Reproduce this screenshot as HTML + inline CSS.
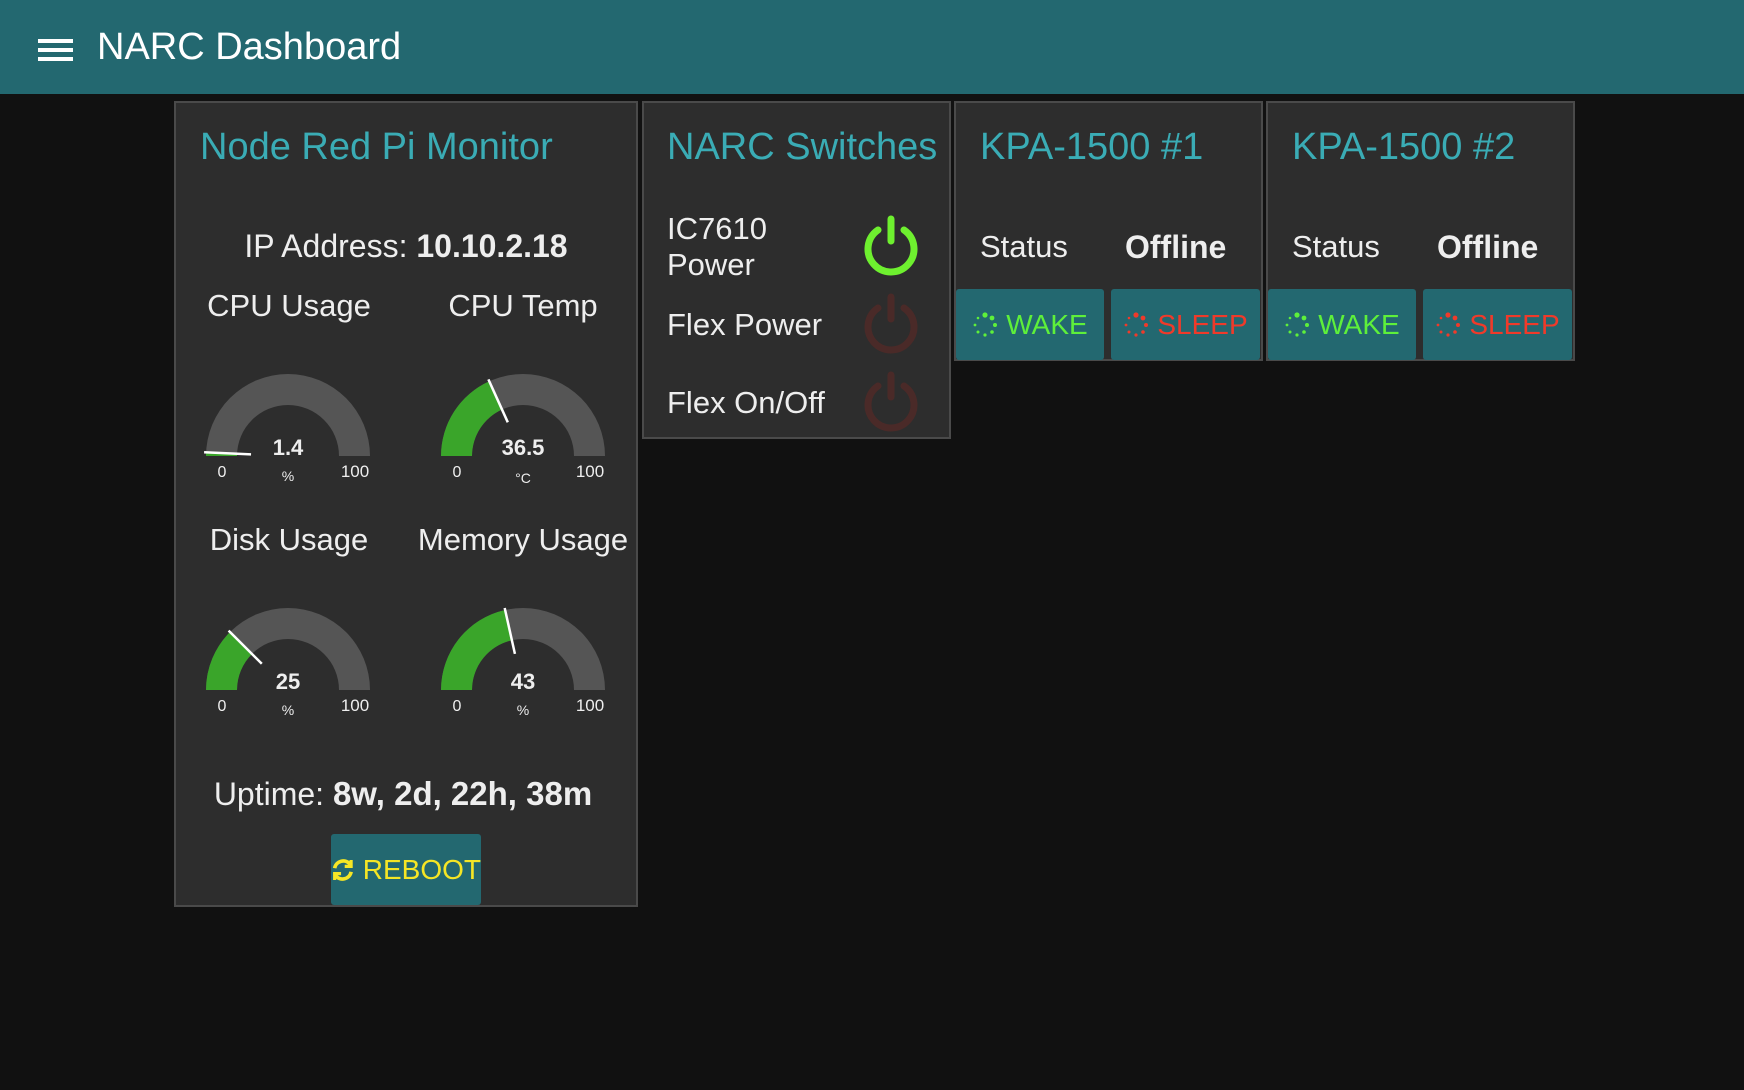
<!DOCTYPE html>
<html><head><meta charset="utf-8"><style>
*{box-sizing:border-box;margin:0;padding:0}
body{width:1744px;height:1090px;background:#111;font-family:"Liberation Sans",sans-serif;color:#eee;position:relative;overflow:hidden}
.hdr{position:absolute;left:0;top:0;width:1744px;height:94px;background:#236870}
.hdr .t{position:absolute;left:97px;top:26px;font-size:38px;color:#fff}
.hb{position:absolute;left:38px;width:35px;height:4px;background:#fff}
.p{position:absolute;background:#2d2d2d;border:2px solid #4a4a4a}
.ti{position:absolute;font-size:38px;color:#3aacb5;white-space:nowrap}
.tx{position:absolute;font-size:31px;white-space:nowrap;color:#eee}
.c{transform:translateX(-50%)}
b{font-weight:bold}
.btn{position:absolute;background:#236870;border-radius:3px;font-size:28px;display:flex;align-items:center;justify-content:center;gap:8px}
</style></head><body>
<div class="hdr"><div class="hb" style="top:39px"></div><div class="hb" style="top:48px"></div><div class="hb" style="top:57px"></div><div class="t">NARC Dashboard</div></div>

<div class="p" style="left:174px;top:101px;width:464px;height:806px"></div>
<div class="ti" style="left:200px;top:126px">Node Red Pi Monitor</div>
<div class="tx c" style="left:406px;top:228px;font-size:32px">IP Address: <b>10.10.2.18</b></div>
<div class="tx c" style="left:289px;top:288px">CPU Usage</div>
<div class="tx c" style="left:523px;top:288px">CPU Temp</div>
<div class="tx c" style="left:289px;top:522px">Disk Usage</div>
<div class="tx c" style="left:523px;top:522px">Memory Usage</div>
<div class="tx c" style="left:403px;top:775px;font-size:32px">Uptime: <b style="font-size:33px">8w, 2d, 22h, 38m</b></div>
<div class="btn" style="left:331px;top:834px;width:150px;height:71px;color:#f5e625">
<svg width="26" height="26" viewBox="0 0 26 26" fill="none" stroke="#f5e625" stroke-width="4"><path d="M4 11A9.5 9.5 0 0 1 21 7"/><path d="M22 15A9.5 9.5 0 0 1 5 19"/><path d="M22 2v7h-7M4 24v-7h7" stroke-width="3.5"/></svg>REBOOT</div>

<div class="p" style="left:642px;top:101px;width:309px;height:338px"></div>
<div class="ti" style="left:667px;top:126px">NARC Switches</div>
<div class="tx" style="left:667px;top:211px;line-height:36px">IC7610<br>Power</div>
<div class="tx" style="left:667px;top:307px">Flex Power</div>
<div class="tx" style="left:667px;top:385px">Flex On/Off</div>

<div class="p" style="left:954px;top:101px;width:309px;height:260px"></div>
<div class="ti" style="left:980px;top:126px">KPA-1500 #1</div>
<div class="tx" style="left:980px;top:229px">Status</div>
<div class="tx" style="left:1125px;top:229px;font-size:32px"><b>Offline</b></div>
<div class="btn" style="left:956px;top:289px;width:148px;height:71px;color:#5ef03a"><svg width="26" height="26" viewBox="-13 -13 26 26" fill="#5ef03a"><circle cx="0" cy="-10" r="2.6"/><circle cx="7" cy="-7" r="2.4"/><circle cx="10" cy="0" r="2"/><circle cx="7" cy="7" r="1.8"/><circle cx="0" cy="10" r="1.6"/><circle cx="-7" cy="7" r="1.5"/><circle cx="-10" cy="0" r="1.4"/><circle cx="-7" cy="-7" r="1.3"/></svg>WAKE</div>
<div class="btn" style="left:1111px;top:289px;width:149px;height:71px;color:#f03a2a"><svg width="26" height="26" viewBox="-13 -13 26 26" fill="#f03a2a"><circle cx="0" cy="-10" r="2.6"/><circle cx="7" cy="-7" r="2.4"/><circle cx="10" cy="0" r="2"/><circle cx="7" cy="7" r="1.8"/><circle cx="0" cy="10" r="1.6"/><circle cx="-7" cy="7" r="1.5"/><circle cx="-10" cy="0" r="1.4"/><circle cx="-7" cy="-7" r="1.3"/></svg>SLEEP</div>

<div class="p" style="left:1266px;top:101px;width:309px;height:260px"></div>
<div class="ti" style="left:1292px;top:126px">KPA-1500 #2</div>
<div class="tx" style="left:1292px;top:229px">Status</div>
<div class="tx" style="left:1437px;top:229px;font-size:32px"><b>Offline</b></div>
<div class="btn" style="left:1268px;top:289px;width:148px;height:71px;color:#5ef03a"><svg width="26" height="26" viewBox="-13 -13 26 26" fill="#5ef03a"><circle cx="0" cy="-10" r="2.6"/><circle cx="7" cy="-7" r="2.4"/><circle cx="10" cy="0" r="2"/><circle cx="7" cy="7" r="1.8"/><circle cx="0" cy="10" r="1.6"/><circle cx="-7" cy="7" r="1.5"/><circle cx="-10" cy="0" r="1.4"/><circle cx="-7" cy="-7" r="1.3"/></svg>WAKE</div>
<div class="btn" style="left:1423px;top:289px;width:149px;height:71px;color:#f03a2a"><svg width="26" height="26" viewBox="-13 -13 26 26" fill="#f03a2a"><circle cx="0" cy="-10" r="2.6"/><circle cx="7" cy="-7" r="2.4"/><circle cx="10" cy="0" r="2"/><circle cx="7" cy="7" r="1.8"/><circle cx="0" cy="10" r="1.6"/><circle cx="-7" cy="7" r="1.5"/><circle cx="-10" cy="0" r="1.4"/><circle cx="-7" cy="-7" r="1.3"/></svg>SLEEP</div>

<svg style="position:absolute;left:0;top:0;z-index:5" width="1744" height="1090">
<defs><path id="bg" d="M-82 0A82 82 0 0 1 82 0L51 0A51 51 0 0 0 -51 0Z" fill="#555"/></defs>
<g font-family="Liberation Sans" fill="#eee" text-anchor="middle">
<g transform="translate(288,456)"><use href="#bg"/><path d="M-82 0A82 82 0 0 1 -81.92 -3.61L-50.95 -2.24A51 51 0 0 0 -51 0Z" fill="#3aa52a"/><line x1="-36.96" y1="-1.63" x2="-83.9" y2="-3.7" stroke="#fff" stroke-width="2.5"/><text y="-1" font-size="22" font-weight="bold">1.4</text><text y="25" font-size="14">%</text><text x="-66" y="21" font-size="16">0</text><text x="67" y="21" font-size="17">100</text></g>
<g transform="translate(523,456)"><use href="#bg"/><path d="M-82 0A82 82 0 0 1 -33.74 -74.73L-20.99 -46.48A51 51 0 0 0 -51 0Z" fill="#3aa52a"/><line x1="-15.2" y1="-33.7" x2="-34.6" y2="-76.6" stroke="#fff" stroke-width="2.5"/><text y="-1" font-size="22" font-weight="bold">36.5</text><text y="27" font-size="14">°C</text><text x="-66" y="21" font-size="16">0</text><text x="67" y="21" font-size="17">100</text></g>
<g transform="translate(288,690)"><use href="#bg"/><path d="M-82 0A82 82 0 0 1 -57.98 -57.98L-36.06 -36.06A51 51 0 0 0 -51 0Z" fill="#3aa52a"/><line x1="-26.2" y1="-26.2" x2="-59.4" y2="-59.4" stroke="#fff" stroke-width="2.5"/><text y="-1" font-size="22" font-weight="bold">25</text><text y="25" font-size="14">%</text><text x="-66" y="21" font-size="16">0</text><text x="67" y="21" font-size="17">100</text></g>
<g transform="translate(523,690)"><use href="#bg"/><path d="M-82 0A82 82 0 0 1 -17.89 -80.02L-11.12 -49.77A51 51 0 0 0 -51 0Z" fill="#3aa52a"/><line x1="-8.07" y1="-36.11" x2="-18.32" y2="-81.98" stroke="#fff" stroke-width="2.5"/><text y="-1" font-size="22" font-weight="bold">43</text><text y="25" font-size="14">%</text><text x="-66" y="21" font-size="16">0</text><text x="67" y="21" font-size="17">100</text></g>
</g>
<g fill="none" stroke-width="7" stroke-linecap="round">
<g stroke="#6ef02f" transform="translate(891,247)"><path d="M-13 -17A23 23 0 1 0 13 -17"/><line x1="0" y1="-28" x2="0" y2="-6"/></g>
<g stroke="#4a2a28" transform="translate(891,325)"><path d="M-13 -17A23 23 0 1 0 13 -17"/><line x1="0" y1="-28" x2="0" y2="-6"/></g>
<g stroke="#4a2a28" transform="translate(891,403)"><path d="M-13 -17A23 23 0 1 0 13 -17"/><line x1="0" y1="-28" x2="0" y2="-6"/></g>
</g>
</svg>
</body></html>
